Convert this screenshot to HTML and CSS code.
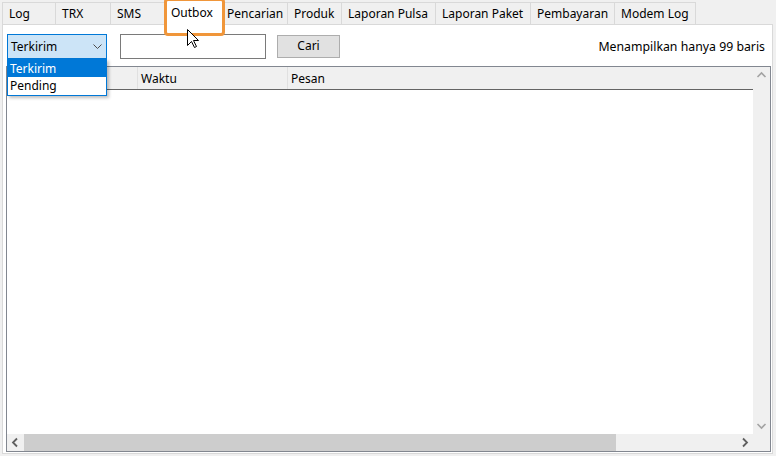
FILE: index.html
```html
<!DOCTYPE html>
<html>
<head>
<meta charset="utf-8">
<link rel="stylesheet" href="styles.css">
</head>
<body>
<div class="window">
  <div class="tabs">
    <div class="tab t1">Log</div>
    <div class="tab t2">TRX</div>
    <div class="tab t3">SMS</div>
    <div class="tab active">Outbox</div>
    <div class="tab t5">Pencarian</div>
    <div class="tab t6">Produk</div>
    <div class="tab t7">Laporan Pulsa</div>
    <div class="tab t8">Laporan Paket</div>
    <div class="tab t9">Pembayaran</div>
    <div class="tab t10">Modem Log</div>
  </div>
  <div class="panel">
    <div class="toolbar">
      <div class="combo">
        <span>Terkirim</span>
        <svg class="combo-arrow" width="9" height="6" viewBox="0 0 9 6"><path d="M0.5 0.5 L4.5 4.5 L8.5 0.5" fill="none" stroke="#4d4d4d" stroke-width="1"/></svg>
      </div>
      <div class="textbox"></div>
      <div class="btn">Cari</div>
      <div class="info">Menampilkan hanya 99 baris</div>
    </div>
    <div class="list">
      <div class="list-main">
        <div class="header">
          <div class="col c1"></div>
          <div class="col c2">Waktu</div>
          <div class="col c3">Pesan</div>
        </div>
        <div class="rows"></div>
      </div>
      <div class="vscroll">
        <svg width="17" height="17" viewBox="0 0 17 17"><path d="M4.5 10 L8.5 6 L12.5 10" fill="none" stroke="#a3a3a3" stroke-width="1.6"/></svg>
        <svg width="17" height="17" viewBox="0 0 17 17"><path d="M4.5 7 L8.5 11 L12.5 7" fill="none" stroke="#a3a3a3" stroke-width="1.6"/></svg>
      </div>
      <div class="hscroll">
        <svg class="harrow" width="17" height="17" viewBox="0 0 17 17"><path d="M10 4.5 L6 8.5 L10 12.5" fill="none" stroke="#606060" stroke-width="1.8"/></svg>
        <div class="thumb"></div>
        <div class="track"></div>
        <svg class="harrow" width="17" height="17" viewBox="0 0 17 17"><path d="M7 4.5 L11 8.5 L7 12.5" fill="none" stroke="#606060" stroke-width="1.8"/></svg>
      </div>
      <div class="corner"></div>
    </div>
  </div>

  <div class="dropdown">
    <div class="item sel">Terkirim</div>
    <div class="item">Pending</div>
  </div>
  <div class="focus-ring"></div>
  <svg class="cursor" width="13" height="20" viewBox="0 0 13 20"><path d="M0.5 0.5 L0.5 16.5 L4.5 12.5 L7.5 18.5 L9.5 17.5 L6.5 11.5 L11.5 11.5 Z" fill="#ffffff" stroke="#000000" stroke-width="1"/></svg>
</div>
</body>
</html>
```

FILE: styles.css
```css
* { box-sizing: border-box; }
html, body {
  margin: 0;
  padding: 0;
  background: #f0f0f0;
}
body {
  font-family: "Noto Sans", "Open Sans", sans-serif;
  font-size: 12px;
  color: #000;
}
.window {
  position: relative;
  width: 776px;
  height: 456px;
  padding-left: 2px;
  overflow: hidden;
}
.tabs {
  display: flex;
  align-items: flex-end;
  height: 24px;
}
.tab {
  height: 22px;
  border-top: 1px solid #d9d9d9;
  border-left: 1px solid #d9d9d9;
  background: #f0f0f0;
  padding-left: 6px;
  line-height: 22px;
  white-space: nowrap;
  flex: none;
}
.t1 { width: 53px; }
.t2 { width: 55px; }
.t3 { width: 56px; }
.t5 { width: 65px; padding-left: 4px; }
.t6 { width: 54px; }
.t7 { width: 94px; }
.t8 { width: 95px; }
.t9 { width: 84px; }
.t10 { width: 82px; border-right: 1px solid #d9d9d9; }
.tab.active {
  position: relative;
  z-index: 2;
  width: 60px;
  height: 25px;
  margin: 0 -2px -1px -2px;
  background: #fff;
  border-right: 1px solid #d9d9d9;
  padding-left: 6px;
  line-height: 24px;
}
.panel {
  position: relative;
  width: 771px;
  height: 430px;
  border: 1px solid #d9d9d9;
  background: #fff;
  display: flex;
  flex-direction: column;
  padding: 9px 0 1px 0;
}
.toolbar {
  display: flex;
  align-items: center;
  height: 25px;
  padding: 0 7px 0 4px;
}
.combo {
  width: 100px;
  height: 25px;
  border: 1px solid #0078d7;
  background: #cce4f7;
  display: flex;
  align-items: center;
  justify-content: space-between;
  padding: 0 4px 0 3px;
}
.combo-arrow { margin-top: 1px; }
.textbox {
  width: 146px;
  height: 25px;
  margin-left: 13px;
  border: 1px solid #7a7a7a;
  background: #fff;
}
.btn {
  width: 63px;
  height: 23px;
  margin-left: 11px;
  border: 1px solid #adadad;
  background: #e1e1e1;
  text-align: center;
  line-height: 20px;
}
.info {
  margin-left: auto;
  white-space: nowrap;
  font-size: 12.3px;
}
.list {
  flex: 1;
  margin: 7px 1px 0 3px;
  border: 1px solid #828790;
  display: grid;
  grid-template-columns: 1fr 17px;
  grid-template-rows: 1fr 17px;
  min-height: 0;
}
.list-main {
  display: flex;
  flex-direction: column;
  background: #fff;
  min-width: 0;
}
.header {
  display: flex;
  height: 23px;
  background: #f0f0f0;
  border-bottom: 1px solid #646464;
}
.col {
  border-right: 1px solid #e0e0e0;
  padding-left: 3px;
  line-height: 23px;
  white-space: nowrap;
}
.c1 { width: 131px; }
.c2 { width: 150px; }
.c3 { flex: 1; border-right: none; }
.rows { flex: 1; }
.vscroll {
  background: #f0f0f0;
  display: flex;
  flex-direction: column;
  justify-content: space-between;
}
.vscroll svg { display: block; }
.hscroll {
  background: #f0f0f0;
  display: flex;
}
.harrow { display: block; flex: none; }
.thumb {
  width: 592px;
  background: #cdcdcd;
}
.track { flex: 1; }
.corner { background: #f0f0f0; }
.dropdown {
  position: absolute;
  left: 7px;
  top: 59px;
  width: 100px;
  height: 37px;
  border: 1px solid #0078d7;
  background: #fff;
  box-shadow: 2px 2px 3px rgba(0,0,0,0.25);
  z-index: 5;
}
.item {
  height: 17px;
  line-height: 17px;
  padding-left: 2px;
}
.item.sel {
  background: #0078d7;
  color: #fff;
}
.focus-ring {
  position: absolute;
  left: 164px;
  top: -2px;
  width: 61px;
  height: 38px;
  border: 3px solid #f0963a;
  border-radius: 4px;
  z-index: 6;
}
.cursor {
  position: absolute;
  left: 187px;
  top: 29px;
  z-index: 7;
}
```
